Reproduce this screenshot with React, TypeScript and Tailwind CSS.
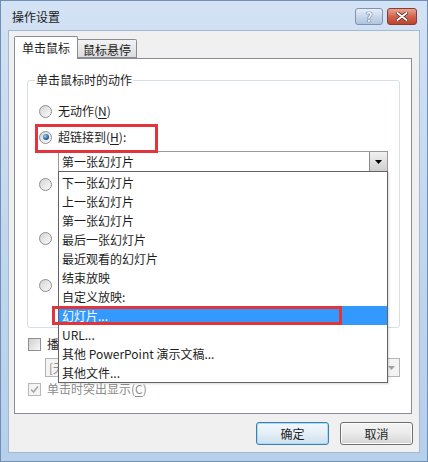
import React from "react";

const LIST_ITEMS = [
  "下一张幻灯片",
  "上一张幻灯片",
  "第一张幻灯片",
  "最后一张幻灯片",
  "最近观看的幻灯片",
  "结束放映",
  "自定义放映:",
  "幻灯片...",
  "URL...",
  "其他 PowerPoint 演示文稿...",
  "其他文件...",
];

const Key: React.FC<{ k: string }> = ({ k }) => (
  <>
    (<span className="underline underline-offset-2">{k}</span>)
  </>
);

const Radio: React.FC<{ checked?: boolean }> = ({ checked }) => (
  <span className="flex w-[13px] h-[13px] shrink-0 items-center justify-center rounded-full border border-[#8e8f8f] bg-gradient-to-br from-[#d4d4d4] to-[#fbfbfb]">
    {checked && (
      <span className="w-[6px] h-[6px] rounded-full bg-[radial-gradient(circle_at_35%_35%,#9fd0f2,#2a6aa2_55%,#0e3457)]" />
    )}
  </span>
);

const Check: React.FC<{ checked?: boolean; disabled?: boolean }> = ({ checked, disabled }) => (
  <span
    className={
      "flex w-[13px] h-[13px] shrink-0 items-center justify-center border " +
      (disabled
        ? "border-[#b8b8b8] bg-[#f4f4f4]"
        : "border-[#8e8f8f] bg-gradient-to-br from-[#cfcfcf] to-[#f8f8f8]")
    }
  >
    {checked && (
      <svg width="9" height="9" viewBox="0 0 9 9">
        <path d="M1 4.5 L3.5 7 L8 1.5" fill="none" stroke="#a8a8a8" strokeWidth="1.6" />
      </svg>
    )}
  </span>
);

const Arrow: React.FC<{ color?: string }> = ({ color = "#000" }) => (
  <svg width="7" height="4" viewBox="0 0 7 4">
    <path d="M0 0 H7 L3.5 4 Z" fill={color} />
  </svg>
);

const Combo: React.FC<{ text?: string; open?: boolean }> = ({ text = "", open }) => (
  <div className="relative ml-[30px] flex w-[330px] h-[21px] border border-[#9a9a9a] bg-white">
    <span className="flex-1 pl-[3px] leading-[19px]">{text}</span>
    <span className="flex w-[18px] items-center justify-center border-l border-[#8a8a8a] bg-gradient-to-b from-[#f2f2f2] to-[#cfcfcf]">
      <Arrow />
    </span>
    {open && (
      <div className="absolute left-[-1px] top-[19px] z-10 w-[330px] h-[212px] border border-[#646464] bg-white pt-px shadow-[1px_1px_2px_rgba(0,0,0,0.15)]">
        {LIST_ITEMS.map((item, i) => (
          <div
            key={item}
            className={
              "h-[19px] pl-[3px] leading-[19px] " +
              (i === 7 ? "bg-[#3399ff] text-white" : "text-[#1e1e1e]")
            }
          >
            {item}
          </div>
        ))}
      </div>
    )}
  </div>
);

const RadioRow: React.FC<{ checked?: boolean; children?: React.ReactNode; className?: string }> = ({
  checked,
  children,
  className = "",
}) => (
  <div className={"flex h-[20px] items-center pl-[11px] " + className}>
    <Radio checked={checked} />
    {children && <span className="ml-[6px] leading-[16px]">{children}</span>}
  </div>
);

export default function App() {
  return (
    <div className="relative w-[428px] h-[462px] overflow-hidden border border-[#6f8fb5] bg-gradient-to-b from-[#d3e2f4] via-[#c2d7ef] to-[#b6cfeb] font-['Noto_Sans_CJK_SC',sans-serif] text-[12px] text-[#1e1e1e]">
      {/* title bar */}
      <div className="flex h-[29px] items-start justify-between pl-[11px] pr-[10px]">
        <span className="mt-[8px] leading-[16px] text-[#1a1a1a]">操作设置</span>
        <div className="mt-[7px] flex gap-[4px]">
          <span className="flex w-[28px] h-[17px] items-center justify-center rounded-[3px] border border-[#7d93b2] bg-gradient-to-b from-[#e6eef8] via-[#c9d8ea] to-[#b0c5de] text-[13px] font-bold leading-none text-[#f4f8fc] [text-shadow:0_0_1px_#2c4a70,0_0_1px_#2c4a70]">
            ?
          </span>
          <span className="flex w-[30px] h-[17px] items-center justify-center rounded-[3px] border border-[#8a3b30] bg-gradient-to-b from-[#e8a596] via-[#d06550] to-[#c0412c]">
            <svg width="12" height="9" viewBox="0 0 12 9">
              <path
                d="M1.5 1 L10.5 8 M10.5 1 L1.5 8"
                stroke="#5a1c14"
                strokeWidth="3.4"
                strokeLinecap="round"
              />
              <path
                d="M1.5 1 L10.5 8 M10.5 1 L1.5 8"
                stroke="#ffffff"
                strokeWidth="2"
                strokeLinecap="round"
              />
            </svg>
          </span>
        </div>
      </div>

      {/* client area */}
      <div className="mx-[7px] h-[423px] border border-[#a3b8d2] bg-[#f0f0f0] pl-[5px] pt-[5px]">
        {/* tabs */}
        <div className="flex h-[22px] items-end">
          <div className="relative z-10 -mb-px flex w-[64px] h-[23px] items-center justify-center rounded-t-[2px] border border-b-0 border-[#898c95] bg-white leading-[16px]">
            单击鼠标
          </div>
          <div className="flex w-[59px] h-[19px] items-center justify-center rounded-tr-[2px] border border-l-0 border-[#898c95] bg-gradient-to-b from-[#f3f3f3] to-[#dcdcdc] pt-[2px] leading-[16px]">
            鼠标悬停
          </div>
        </div>

        {/* panel */}
        <div className="w-[398px] h-[356px] border border-[#898c95] bg-white">
          <div className="relative ml-[12px] mt-[21px] w-[373px] h-[248px] rounded-[3px] border border-[#d5dfe5]">
            <span className="absolute left-[7px] top-[-9px] bg-white px-[1px] leading-[16px]">
              单击鼠标时的动作
            </span>
            <RadioRow className="mt-[20px]">
              无动作<Key k="N" />
            </RadioRow>
            <RadioRow checked className="mt-[6px]">
              超链接到<Key k="H" />:
            </RadioRow>
            <div className="mt-[4px]">
              <Combo text="第一张幻灯片" open />
            </div>
            {/* rows covered by the open list */}
            <RadioRow className="mt-[2px]" />
            <div className="mt-[4px]">
              <Combo />
            </div>
            <RadioRow className="mt-[9px]" />
            <div className="mt-[4px]">
              <Combo />
            </div>
            <RadioRow className="mt-[2px]" />
            <div className="mt-[4px]">
              <Combo />
            </div>
          </div>

          <div className="mt-[8px] flex h-[16px] items-center pl-[13px]">
            <Check />
            <span className="ml-[6px] leading-[16px]">
              播放声音<Key k="P" />:
            </span>
          </div>
          <div className="ml-[30px] mt-[6px] flex w-[355px] h-[19px] border border-[#b5b5b5] bg-[#f4f4f4] text-[#8d8d8d]">
            <span className="flex-1 pl-[3px] leading-[17px]">[无声音]</span>
            <span className="flex w-[16px] items-center justify-center">
              <Arrow color="#a0a0a0" />
            </span>
          </div>
          <div className="mt-[4px] flex h-[16px] items-center pl-[13px]">
            <Check checked disabled />
            <span className="ml-[6px] leading-[16px] text-[#8d8d8d]">
              单击时突出显示<Key k="C" />
            </span>
          </div>
        </div>

        {/* buttons */}
        <div className="mt-[8px] flex justify-end gap-[11px] pr-[6px]">
          <button className="flex w-[73px] h-[23px] items-center justify-center rounded-[3px] border border-[#3c7fb1] bg-gradient-to-b from-[#f2f8fc] via-[#e4eff8] to-[#cfe0ee] leading-none shadow-[inset_0_0_0_1px_#a8dcf6]">
            确定
          </button>
          <button className="flex w-[73px] h-[23px] items-center justify-center rounded-[3px] border border-[#707070] bg-gradient-to-b from-[#f4f4f4] via-[#ebebeb] to-[#d4d4d4] leading-none shadow-[inset_0_0_0_1px_#fcfcfc]">
            取消
          </button>
        </div>
      </div>

      {/* red annotation boxes */}
      <div className="absolute left-[34px] top-[123px] z-20 w-[123px] h-[29px] border-[3px] border-[#e3343c]" />
      <div className="absolute left-[51px] top-[305px] z-20 w-[290px] h-[19px] border-[3px] border-[#e3343c]" />
    </div>
  );
}
